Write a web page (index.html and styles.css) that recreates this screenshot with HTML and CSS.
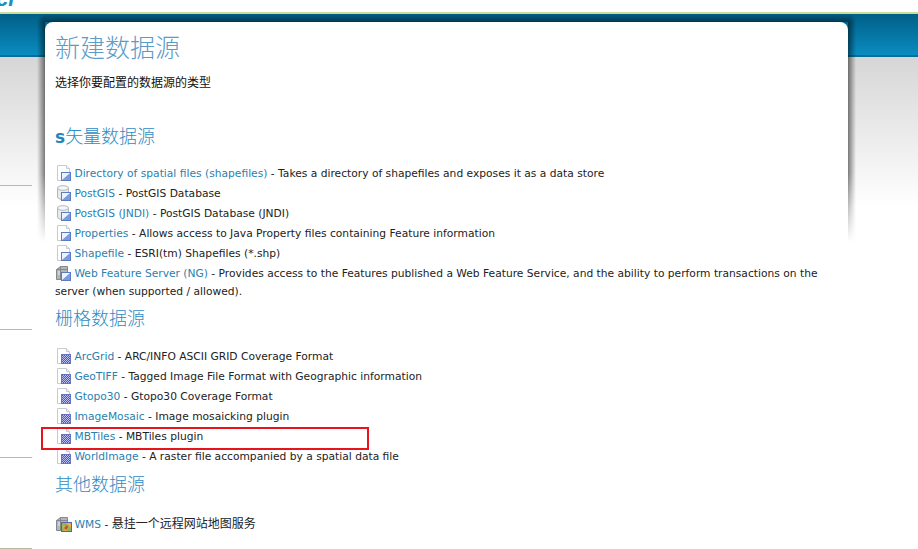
FILE: index.html
```html
<!DOCTYPE html>
<html lang="zh-CN">

<head>
    <meta charset="UTF-8" />
    <title>新建数据源</title>
    <link rel="stylesheet" href="styles.css">
</head>

<body>
    <svg class="icon-defs" width="0" height="0">
        <defs>
            <pattern id="check" width="2" height="2" patternUnits="userSpaceOnUse">
                <rect width="2" height="2" fill="#5058bc" />
                <rect width="1" height="1" fill="#b9bef0" />
                <rect x="1" y="1" width="1" height="1" fill="#b9bef0" />
            </pattern>
            <symbol id="page" viewBox="0 0 16 16">
                <path d="M1.500.5h9l3 3v12h-12z" fill="#fff" stroke="#c8ccd0" />
                <path d="M10.500.5v3h3" fill="#eef0f2" stroke="#c8ccd0" />
            </symbol>
            <symbol id="vector-badge" viewBox="0 0 16 16">
                <rect x="5.500" y="7.500" width="9" height="8" fill="#eef2fb" stroke="#5a7cc4" />
                <path d="M6 15l8-7v7z" fill="#7d9bdc" />
            </symbol>
            <symbol id="raster-badge" viewBox="0 0 16 16">
                <rect x="5.500" y="6.500" width="9" height="9" fill="url(#check)" stroke="#6a72c4" />
            </symbol>
            <symbol id="db" viewBox="0 0 16 16">
                <path d="M1.500 3v9c0 1.500 2.500 2.500 5.500 2.500s5.500-1 5.500-2.500V3z" fill="#e8eaec" stroke="#b4b8bc" />
                <ellipse cx="7" cy="3" rx="5.500" ry="2.300" fill="#f6f7f8" stroke="#b4b8bc" />
            </symbol>
            <symbol id="server" viewBox="0 0 16 16">
                <path d="M.5 4.500l4-3h7v10l-4 3h-7z" fill="#b4b6b8" stroke="#84888c" />
                <path d="M4.500 1.500v3h7M.5 4.500h4v10" fill="none" stroke="#84888c" />
                <path d="M2 7h2M2 9h2" stroke="#eceeef" />
            </symbol>
            <symbol id="map-badge" viewBox="0 0 16 16">
                <rect x="5.500" y="6.500" width="10" height="9" fill="#8fb45a" stroke="#5a62b8" />
                <path d="M6 9l4 2 1 4H9zM10 7l5 5V7z" fill="#e8b23a" />
                <path d="M8 12l3-3 1 2-2 3z" fill="#c84a32" />
            </symbol>
        </defs>
    </svg>

    <header class="top">
        <span class="logo">cr</span>
    </header>

    <div class="page">
        <aside class="side">
            <div class="side-item first"></div>
            <div class="side-item second"></div>
            <div class="side-item third"></div>
            <div class="side-item fourth"></div>
        </aside>

        <main class="card">
            <h1>新建数据源</h1>
            <p class="intro">选择你要配置的数据源的类型</p>

            <h3 class="vector-title"><b>s</b>矢量数据源</h3>
            <ul>
                <li>
                    <svg class="icon"><use href="#page" /><use href="#vector-badge" /></svg>
                    <a href="#">Directory of spatial files (shapefiles)</a> - Takes a directory of shapefiles and exposes it as a data store
                </li>
                <li>
                    <svg class="icon"><use href="#db" /><use href="#vector-badge" /></svg>
                    <a href="#">PostGIS</a> - PostGIS Database
                </li>
                <li>
                    <svg class="icon"><use href="#db" /><use href="#vector-badge" /></svg>
                    <a href="#">PostGIS (JNDI)</a> - PostGIS Database (JNDI)
                </li>
                <li>
                    <svg class="icon"><use href="#page" /><use href="#vector-badge" /></svg>
                    <a href="#">Properties</a> - Allows access to Java Property files containing Feature information
                </li>
                <li>
                    <svg class="icon"><use href="#page" /><use href="#vector-badge" /></svg>
                    <a href="#">Shapefile</a> - ESRI(tm) Shapefiles (*.shp)
                </li>
                <li>
                    <svg class="icon"><use href="#server" /><use href="#vector-badge" /></svg>
                    <a href="#">Web Feature Server (NG)</a> - Provides access to the Features published a Web Feature Service, and the ability to perform transactions on the server (when supported / allowed).
                </li>
            </ul>

            <h3>栅格数据源</h3>
            <ul class="raster-list">
                <li>
                    <svg class="icon"><use href="#page" /><use href="#raster-badge" /></svg>
                    <a href="#">ArcGrid</a> - ARC/INFO ASCII GRID Coverage Format
                </li>
                <li>
                    <svg class="icon"><use href="#page" /><use href="#raster-badge" /></svg>
                    <a href="#">GeoTIFF</a> - Tagged Image File Format with Geographic information
                </li>
                <li>
                    <svg class="icon"><use href="#page" /><use href="#raster-badge" /></svg>
                    <a href="#">Gtopo30</a> - Gtopo30 Coverage Format
                </li>
                <li>
                    <svg class="icon"><use href="#page" /><use href="#raster-badge" /></svg>
                    <a href="#">ImageMosaic</a> - Image mosaicking plugin
                </li>
                <li>
                    <svg class="icon"><use href="#page" /><use href="#raster-badge" /></svg>
                    <a href="#">MBTiles</a> - MBTiles plugin
                </li>
                <li>
                    <svg class="icon"><use href="#page" /><use href="#raster-badge" /></svg>
                    <a href="#">WorldImage</a> - A raster file accompanied by a spatial data file
                </li>
            </ul>

            <h3 class="other-title">其他数据源</h3>
            <ul class="other-list">
                <li>
                    <svg class="icon"><use href="#server" /><use href="#map-badge" /></svg>
                    <a href="#">WMS</a> - <span class="cn">悬挂一个远程网站地图服务</span>
                </li>
            </ul>

            <div class="mark"></div>
        </main>
    </div>
</body>

</html>
```

FILE: styles.css
```css
* {
    box-sizing: border-box;
}

html,
body {
    height: 100%;
}

body {
    margin: 0;
    overflow: hidden;
    font-family: "DejaVu Sans", "Noto Sans CJK SC", sans-serif;
    font-size: 10.7px;
    color: #222;
    background-color: #fff;
    background-image:
        linear-gradient(#c9dc9a, #c9dc9a),
        linear-gradient(#005f87, #0a8cc0),
        linear-gradient(#056f9a, #056f9a),
        linear-gradient(#d6d6d6, #fff);
    background-repeat: no-repeat;
    background-size: 100% 2px, 100% 41px, 100% 2px, 100% 150px;
    background-position: 0 12px, 0 14px, 0 55px, 0 57px;
}

.icon-defs {
    display: block;
}

.top {
    height: 12px;
    overflow: hidden;
}

.logo {
    display: block;
    margin: -12px 0 0 -4px;
    font-family: "Liberation Sans", sans-serif;
    font-size: 22px;
    font-weight: bold;
    font-style: italic;
    line-height: 22px;
    color: #1b8fc4;
}

.page {
    display: grid;
    grid-template-columns: 32px 803px;
    column-gap: 13px;
    padding-top: 10px;
}

.side-item {
    border-bottom: 1px solid #b9b9a6;
}

.side-item.first {
    height: 164px;
}

.side-item.second {
    height: 144px;
}

.side-item.third {
    height: 128px;
}

.side-item.fourth {
    height: 91px;
}

.card {
    position: relative;
    padding: 0 10px;
    background: #fff;
    border-radius: 8px 8px 0 0;
}

/* shadow strips round the card, faded out towards the bottom */
.card::before {
    content: "";
    position: absolute;
    top: -8px;
    left: -8px;
    right: -8px;
    height: 228px;
    background-image:
        radial-gradient(circle at 100% 100%, rgba(0, 0, 0, 0.45), transparent 8px),
        radial-gradient(circle at 0 100%, rgba(0, 0, 0, 0.45), transparent 8px),
        linear-gradient(to top, rgba(0, 0, 0, 0.45), transparent),
        linear-gradient(to left, rgba(0, 0, 0, 0.5), transparent),
        linear-gradient(to right, rgba(0, 0, 0, 0.5), transparent);
    background-repeat: no-repeat;
    background-size: 8px 8px, 8px 8px, calc(100% - 16px) 8px, 8px 100%, 8px 100%;
    background-position: 0 0, 100% 0, 8px 0, 0 8px, 100% 8px;
    -webkit-mask-image: linear-gradient(#000 70%, transparent);
    mask-image: linear-gradient(#000 70%, transparent);
}

h1 {
    margin: 0;
    padding-top: 12px;
    font-size: 25px;
    font-weight: 300;
    line-height: 30px;
    color: #5b9bc8;
}

.intro {
    margin: 9px 0 0;
    font-size: 12px;
    line-height: 20px;
    color: #111;
}

h3 {
    margin: 4px 0 0;
    font-size: 18px;
    font-weight: 300;
    line-height: 26px;
    color: #2f8cc4;
}

h3.vector-title {
    margin-top: 31px;
}

h3.other-title {
    margin-top: 5px;
}

h3 b {
    font-weight: bold;
    font-size: 17px;
    color: #1f86bd;
}

ul {
    margin: 14px 0 0;
    padding: 0;
    list-style: none;
}

ul.raster-list {
    margin-top: 15px;
}

ul.other-list {
    margin-top: 16px;
}

li {
    padding: 1px 0;
    line-height: 18px;
}

li a {
    color: #2a7fb0;
    text-decoration: none;
}

.cn {
    font-size: 12px;
}

.icon {
    width: 16px;
    height: 16px;
    margin: -3px -1px -3px 1px;
    vertical-align: -1px;
}

.mark {
    position: absolute;
    top: 405px;
    left: -4px;
    width: 328px;
    height: 23px;
    border: 2px solid #e8141c;
}
```
